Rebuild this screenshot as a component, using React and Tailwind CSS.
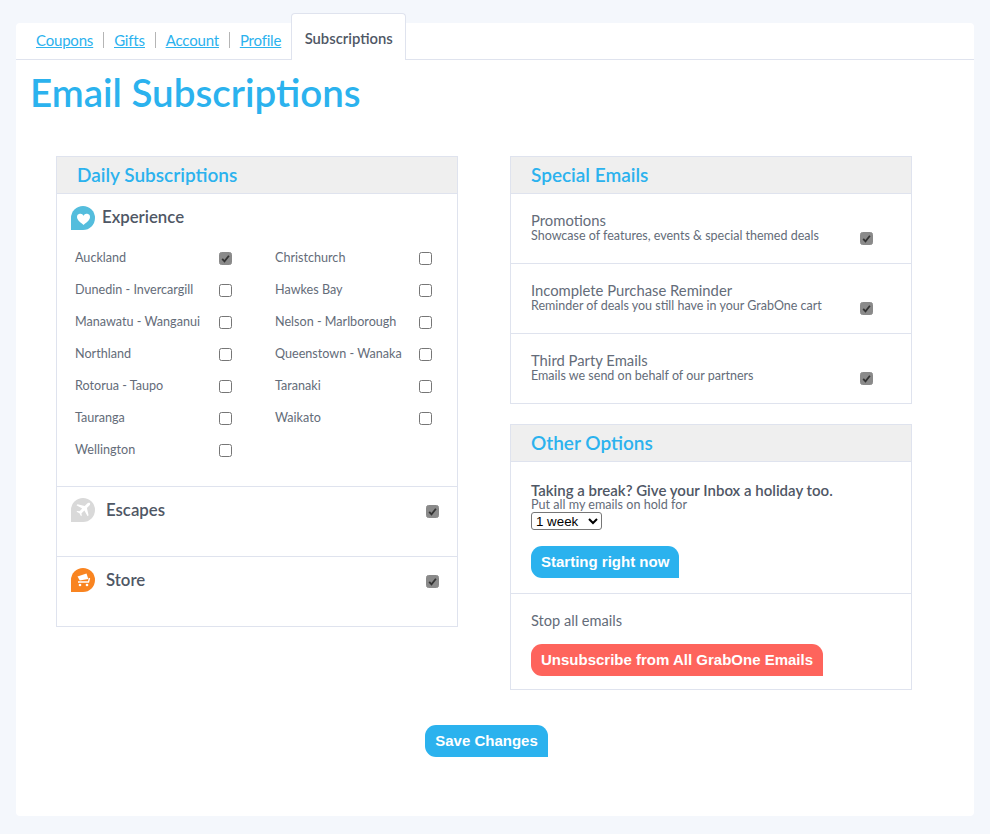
import React from 'react';

const cities = [
  'Auckland', 'Christchurch',
  'Dunedin - Invercargill', 'Hawkes Bay',
  'Manawatu - Wanganui', 'Nelson - Marlborough',
  'Northland', 'Queenstown - Wanaka',
  'Rotorua - Taupo', 'Taranaki',
  'Tauranga', 'Waikato',
  'Wellington',
];

const specials = [
  ['Promotions', 'Showcase of features, events & special themed deals'],
  ['Incomplete Purchase Reminder', 'Reminder of deals you still have in your GrabOne cart'],
  ['Third Party Emails', 'Emails we send on behalf of our partners'],
];

function Check({ checked }) {
  return (
    <label className="relative block w-[13px] h-[13px] shrink-0">
      <input
        type="checkbox"
        defaultChecked={checked}
        className="peer block appearance-none w-[13px] h-[13px] rounded-[2.5px] border border-[#767676] bg-white checked:bg-[#8a8a8a] checked:border-[#8a8a8a]"
      />
      <svg viewBox="0 0 13 13" className="absolute inset-0 hidden peer-checked:block pointer-events-none">
        <path d="M3.200 6.800l2.300 2.500L9.900 3.700" fill="none" stroke="#333" strokeWidth="1.800" />
      </svg>
    </label>
  );
}

function Bubble({ color, children }) {
  return (
    <svg viewBox="0 0 24 24" className="w-6 h-6 shrink-0">
      <path d="M12 0a12 12 0 0 1 0 24H0V12A12 12 0 0 1 12 0z" fill={color} />
      {children}
    </svg>
  );
}

function PanelTitle({ children, className = 'pl-5' }) {
  return (
    <div className={`h-[37px] bg-[#efefef] border-b border-[#dfe3ee] flex items-center text-[19px] font-semibold text-[#2bb2ee] ${className}`}>
      {children}
    </div>
  );
}

function Button({ children, color = 'bg-[#2bb2ee]' }) {
  return (
    <button className={`block h-8 px-2.5 rounded-t-[11px] rounded-bl-[11px] text-white text-[15px] font-bold font-['Liberation_Sans',sans-serif] ${color}`}>
      {children}
    </button>
  );
}

export default function App() {
  return (
    <div className="min-h-[834px] bg-[#f4f7fc] px-4 pt-[23px] pb-[18px] font-['Lato',sans-serif] text-[#4f5765]">
      <div className="h-[793px] bg-white rounded-[4px]">
        {/* Tabs */}
        <div className="h-[37px] border-b border-[#dfe3ee] flex pl-5 relative">
          <nav className="flex items-center h-8 text-[15px] font-normal tracking-[-0.2px] text-[#2bb2ee] underline pt-0.5">
            <a className="pr-[10px] border-r border-[#b5b5b5] leading-[16px]">Coupons</a>
            <a className="px-[10px] border-r border-[#b5b5b5] leading-[16px]">Gifts</a>
            <a className="px-[10px] border-r border-[#b5b5b5] leading-[16px]">Account</a>
            <a className="pl-[10px] leading-[16px]">Profile</a>
          </nav>
          <div className="ml-[10px] -mt-[10px] h-[47px] w-[115px] bg-white border border-b-0 border-[#dfe3ee] rounded-t-[4px] flex items-center justify-center pt-0.5 text-[14.8px] font-semibold z-10">
            Subscriptions
          </div>
        </div>

        <h1 className="pl-[14px] pt-2 text-[38.500px] leading-[48px] font-semibold text-[#2bb2ee]">Email Subscriptions</h1>

        <div className="flex items-start gap-[52px] pl-10 pt-10">
          {/* Left column */}
          <div className="w-[402px] border border-[#dfe3ee]">
            <PanelTitle>Daily Subscriptions</PanelTitle>
            <div className="h-[293px] border-b border-[#dfe3ee] pt-3 pl-[14px]">
              <div className="flex items-center gap-[7px] text-[16.8px] font-semibold">
                <Bubble color="#54bddd">
                  <path d="M12.500 19l-1-.9C8 15.200 6 13.400 6 11.200a3.400 3.400 0 0 1 6.500-1.400A3.400 3.400 0 0 1 19 11.200c0 2.200-2 4-5.500 6.900z" fill="#fff" />
                </Bubble>
                <span className="-mt-0.5">Experience</span>
              </div>
              <div className="grid grid-cols-[200px_200px] mt-3 pl-1 text-[12.6px] font-normal text-[#646c79]">
                {cities.map((city) => (
                  <div key={city} className="h-8 flex items-center justify-between pr-[43px]">
                    <span>{city}</span>
                    <Check checked={city === 'Auckland'} />
                  </div>
                ))}
              </div>
            </div>
            <div className="h-[70px] border-b border-[#dfe3ee] pt-[11px] pl-[14px] pr-[18px] flex items-start text-[16.8px] font-semibold">
              <Bubble color="#d9d9d9">
                <path d="M19 5.200c-.8-.7-2-.6-2.800.2l-2.500 2.500-7.200-1.700-1 1 5.700 3.200-2.700 2.900-2.200-.3-.8.8 3 1.500 1.500 3 .8-.8-.3-2.200 2.900-2.700 3.200 5.700 1-1-1.700-7.200 2.500-2.500c.8-.8.9-2 .6-2.600z" fill="#fff" />
              </Bubble>
              <span className="ml-[11px] flex-1 -mt-px">Escapes</span>
              <span className="mt-[7px]"><Check checked /></span>
            </div>
            <div className="h-[69px] pt-[11px] pl-[14px] pr-[18px] flex items-start text-[16.8px] font-semibold">
              <Bubble color="#f98420">
                <path d="M6.500 8.500l9-3 1.800 5.500-8.500 1.500z" fill="#fff" />
                <path d="M7 14h10.500l1-4" fill="none" stroke="#fff" strokeWidth="1.400" />
                <circle cx="9" cy="17" r="1.300" fill="#fff" />
                <circle cx="16" cy="17" r="1.300" fill="#fff" />
              </Bubble>
              <span className="ml-[11px] flex-1 -mt-px">Store</span>
              <span className="mt-[7px]"><Check checked /></span>
            </div>
          </div>

          {/* Right column */}
          <div className="w-[402px] flex flex-col gap-5">
            <div className="border border-[#dfe3ee]">
              <PanelTitle>Special Emails</PanelTitle>
              {specials.map(([title, text], i) => (
                <div key={title} className={`pl-5 pr-[38px] pt-[18px] flex ${i < 2 ? 'h-[70px] border-b border-[#dfe3ee]' : 'h-[69px]'}`}>
                  <div className="flex-1 text-[#646c79]">
                    <div className="text-[14.8px] leading-[16px] mb-[2px]">{title}</div>
                    <div className="text-[12.5px] leading-[12px]">{text}</div>
                  </div>
                  <span className="mt-5"><Check checked /></span>
                </div>
              ))}
            </div>

            <div className="border border-[#dfe3ee]">
              <PanelTitle>Other Options</PanelTitle>
              <div className="h-[132px] border-b border-[#dfe3ee] pl-5 pt-[20px]">
                <div className="text-[15px] leading-[16px] font-semibold">Taking a break? Give your Inbox a holiday too.</div>
                <div className="text-[12.6px] leading-[14px] text-[#646c79]">Put all my emails on hold for</div>
                <select className="block h-[18px] w-[71px] border border-[#767676] rounded-[3px] bg-white text-black text-[13.333px] leading-none font-['Liberation_Sans',sans-serif]">
                  <option>1 week</option>
                  <option>2 weeks</option>
                  <option>1 month</option>
                </select>
                <div className="mt-4"><Button>Starting right now</Button></div>
              </div>
              <div className="h-[95px] pl-5 pt-[18px]">
                <div className="text-[14.6px] leading-[18px] text-[#646c79]">Stop all emails</div>
                <div className="mt-[14px]"><Button color="bg-[#fe645c]">Unsubscribe from All GrabOne Emails</Button></div>
              </div>
            </div>
          </div>
        </div>

        <div className="flex justify-center pt-[35px] pr-[17px]">
          <Button>Save Changes</Button>
        </div>
      </div>
    </div>
  );
}
